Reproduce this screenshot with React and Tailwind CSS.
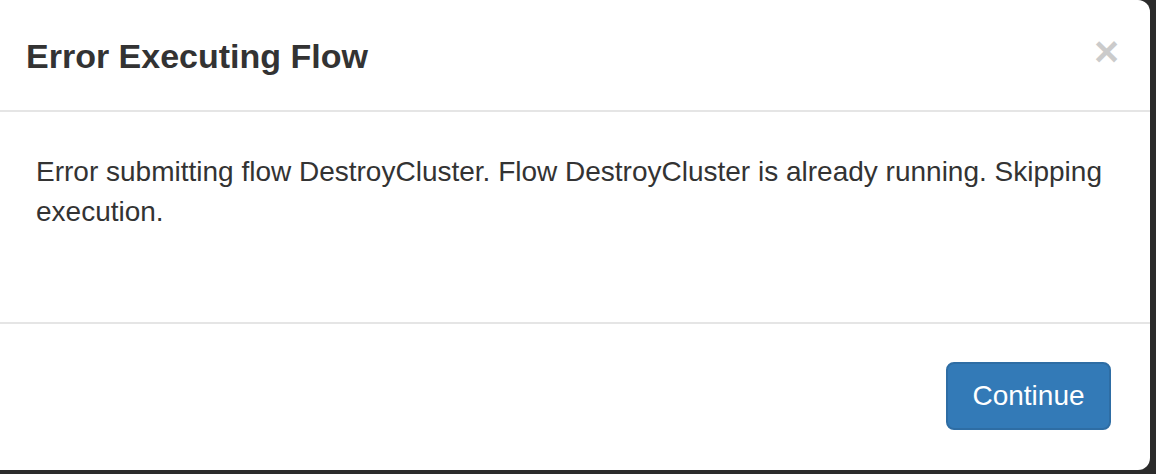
export default function App() {
  return (
    <div
      className="w-[1156px] h-[474px] bg-[#2b2b2b] overflow-hidden"
      style={{ fontFamily: '"Liberation Sans", Arial, sans-serif' }}
    >
      <div className="w-[1150px] h-[470px] bg-white rounded-r-[12px] flex flex-col">
        <div className="h-[112px] border-b-2 border-[#e5e5e5] flex items-start justify-between pl-[26px] pr-[31px]">
          <h4 className="mt-[31px] text-[34px] leading-[50px] font-bold text-[#333]">
            Error Executing Flow
          </h4>
          <button className="mt-[30px] text-[43px] leading-[42px] font-bold text-black opacity-20">
            ×
          </button>
        </div>
        <div className="h-[212px] border-b-2 border-[#e5e5e5] pt-[40px] pl-[36px] pr-[30px] text-[28px] leading-[40px] text-[#333]">
          Error submitting flow DestroyCluster. Flow DestroyCluster is already running. Skipping execution.
        </div>
        <div className="flex-1 flex justify-end items-start pt-[38px] pr-[39px]">
          <button className="w-[165px] h-[68px] bg-[#337ab7] border-2 border-[#2e6da4] rounded-[8px] text-white text-[28px] leading-none">
            Continue
          </button>
        </div>
      </div>
    </div>
  );
}
